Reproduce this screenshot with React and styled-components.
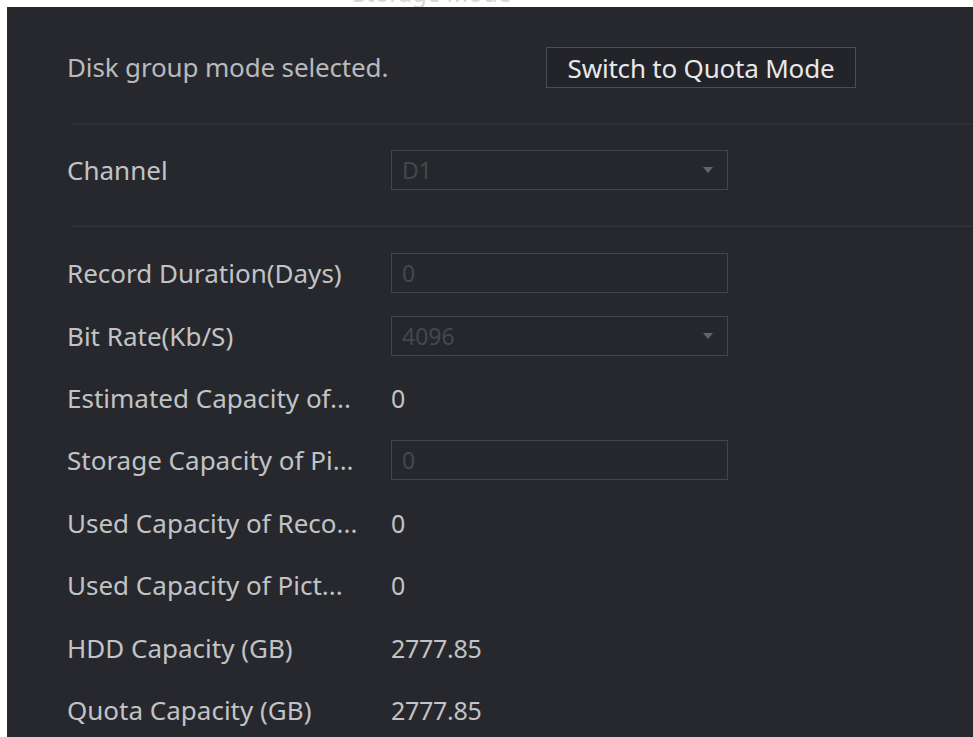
import React from "react";
import styled, { createGlobalStyle } from "styled-components";

const Global = createGlobalStyle`
  html, body { margin: 0; padding: 0; background: #ffffff; }
  body { font-family: "Noto Sans", "Open Sans", sans-serif; overflow: hidden; }
  * { box-sizing: border-box; }
`;

const Page = styled.div`
  width: 973px;
  height: 737px;
  display: flex;
  flex-direction: column;
  padding-left: 7px;
  overflow: hidden;
`;

const TitleStrip = styled.div`
  height: 7px;
  flex: none;
  overflow: hidden;
  display: flex;
  justify-content: center;
  padding-right: 116px;
`;

const TitleText = styled.div`
  margin-top: -19px;
  font-size: 24px;
  color: #d6d6d6;
  line-height: 24px;
  white-space: nowrap;
`;

const Panel = styled.div`
  flex: 1;
  background: #26282d;
  display: flex;
  flex-direction: column;
  padding-left: 60px;
`;

const TopRow = styled.div`
  height: 116px;
  flex: none;
  display: flex;
  align-items: center;
  padding-top: 4px;
`;

const Message = styled.div`
  width: 479px;
  font-size: 26px;
  color: #b9babc;
  letter-spacing: -0.15px;
`;

const ModeButton = styled.div`
  width: 310px;
  height: 41px;
  margin-top: 1px;
  border: 1px solid #4b4e53;
  background: #22242a;
  color: #e8e8e8;
  font-size: 26px;
  display: flex;
  align-items: center;
  justify-content: center;
  letter-spacing: -0.2px;
`;

const Separator = styled.div`
  height: 2px;
  flex: none;
  margin-left: 5px;
  background: #32353a;
  border-top: 1px solid #2c2f34;
`;

const ChannelSection = styled.div`
  height: 100px;
  flex: none;
  display: flex;
  align-items: center;
  padding-bottom: 10px;
`;

const Fields = styled.div`
  display: flex;
  flex-direction: column;
  padding-top: 15px;
`;

const Row = styled.div`
  height: 62.4px;
  flex: none;
  display: flex;
  align-items: center;
`;

const Label = styled.div`
  width: 324px;
  font-size: 26px;
  color: #c2c3c5;
  white-space: nowrap;
  letter-spacing: 0;
`;

const Value = styled.div`
  font-size: 25px;
  color: #c2c3c5;
  letter-spacing: -0.3px;
`;

const Box = styled.div`
  width: 337px;
  height: 40px;
  border: 1px solid #42454a;
  background: #25272c;
  display: flex;
  align-items: center;
  justify-content: space-between;
  padding: 0 14px 0 10px;
  font-size: 23px;
  color: #45484d;
`;

const Arrow = styled.div`
  width: 0;
  height: 0;
  border-left: 5px solid transparent;
  border-right: 5px solid transparent;
  border-top: 6px solid #62656a;
`;

const Select = ({ value }) => (
  <Box>
    <span>{value}</span>
    <Arrow />
  </Box>
);

const Input = ({ value }) => (
  <Box>
    <span>{value}</span>
  </Box>
);

const rows = [
  { label: "Record Duration(Days)", input: "0" },
  { label: "Bit Rate(Kb/S)", select: "4096" },
  { label: "Estimated Capacity of...", value: "0" },
  { label: "Storage Capacity of Pi...", input: "0" },
  { label: "Used Capacity of Reco...", value: "0" },
  { label: "Used Capacity of Pict...", value: "0" },
  { label: "HDD Capacity (GB)", value: "2777.85" },
  { label: "Quota Capacity (GB)", value: "2777.85" },
];

export default function App() {
  return (
    <>
      <Global />
      <Page>
        <TitleStrip>
          <TitleText>Storage Mode</TitleText>
        </TitleStrip>
        <Panel>
          <TopRow>
            <Message>Disk group mode selected.</Message>
            <ModeButton>Switch to Quota Mode</ModeButton>
          </TopRow>
          <Separator />
          <ChannelSection>
            <Label>Channel</Label>
            <Select value="D1" />
          </ChannelSection>
          <Separator />
          <Fields>
            {rows.map((r) => (
              <Row key={r.label}>
                <Label>{r.label}</Label>
                {r.input !== undefined && <Input value={r.input} />}
                {r.select !== undefined && <Select value={r.select} />}
                {r.value !== undefined && <Value>{r.value}</Value>}
              </Row>
            ))}
          </Fields>
        </Panel>
      </Page>
    </>
  );
}
